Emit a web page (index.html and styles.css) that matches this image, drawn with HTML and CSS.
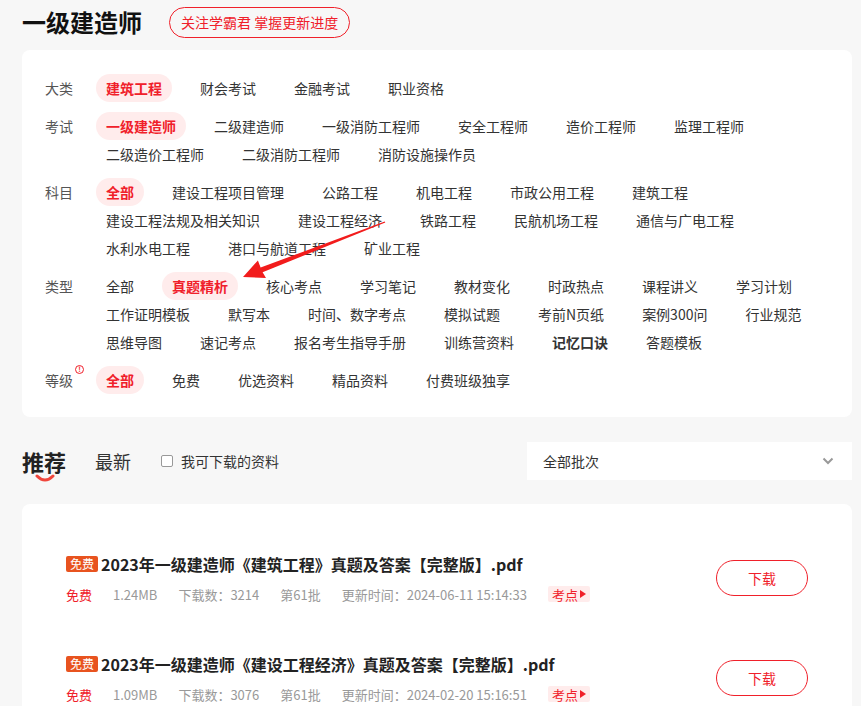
FILE: index.html
```html
<!DOCTYPE html>
<html lang="zh-CN">
<head>
<meta charset="utf-8">
<title>一级建造师</title>
<link rel="stylesheet" href="styles.css">
</head>
<body>
<div class="page">
  <header class="header">
    <h1 class="title">一级建造师</h1>
    <a class="follow">关注学霸君 掌握更新进度</a>
  </header>

  <section class="filter">
    <div class="row">
      <div class="label">大类</div>
      <div class="items">
        <span class="item active">建筑工程</span>
        <span class="item">财会考试</span>
        <span class="item">金融考试</span>
        <span class="item">职业资格</span>
      </div>
    </div>
    <div class="row">
      <div class="label">考试</div>
      <div class="items">
        <span class="item active">一级建造师</span>
        <span class="item">二级建造师</span>
        <span class="item">一级消防工程师</span>
        <span class="item">安全工程师</span>
        <span class="item">造价工程师</span>
        <span class="item">监理工程师</span>
        <span class="item">二级造价工程师</span>
        <span class="item">二级消防工程师</span>
        <span class="item">消防设施操作员</span>
      </div>
    </div>
    <div class="row">
      <div class="label">科目</div>
      <div class="items">
        <span class="item active">全部</span>
        <span class="item">建设工程项目管理</span>
        <span class="item">公路工程</span>
        <span class="item">机电工程</span>
        <span class="item">市政公用工程</span>
        <span class="item">建筑工程</span>
        <span class="item">建设工程法规及相关知识</span>
        <span class="item">建设工程经济</span>
        <span class="item">铁路工程</span>
        <span class="item">民航机场工程</span>
        <span class="item">通信与广电工程</span>
        <span class="item">水利水电工程</span>
        <span class="item">港口与航道工程</span>
        <span class="item">矿业工程</span>
      </div>
    </div>
    <div class="row">
      <div class="label">类型</div>
      <div class="items">
        <span class="item">全部</span>
        <span class="item active">真题精析</span>
        <span class="item">核心考点</span>
        <span class="item">学习笔记</span>
        <span class="item">教材变化</span>
        <span class="item">时政热点</span>
        <span class="item">课程讲义</span>
        <span class="item">学习计划</span>
        <span class="item">工作证明模板</span>
        <span class="item">默写本</span>
        <span class="item">时间、数字考点</span>
        <span class="item">模拟试题</span>
        <span class="item">考前N页纸</span>
        <span class="item">案例300问</span>
        <span class="item">行业规范</span>
        <span class="item">思维导图</span>
        <span class="item">速记考点</span>
        <span class="item">报名考生指导手册</span>
        <span class="item">训练营资料</span>
        <span class="item strong">记忆口诀</span>
        <span class="item">答题模板</span>
      </div>
    </div>
    <div class="row">
      <div class="label"><span class="label-text">等级<span class="info">!</span></span></div>
      <div class="items">
        <span class="item active">全部</span>
        <span class="item">免费</span>
        <span class="item">优选资料</span>
        <span class="item">精品资料</span>
        <span class="item">付费班级独享</span>
      </div>
    </div>
  </section>

  <svg class="arrow" width="150" height="66" viewBox="0 0 150 66" aria-hidden="true">
    <polygon points="3,60 26,61 22.6,55.2 145.3,5.6 144.7,4.4 20.6,50.6 17.9,43.5" fill="#f21c1c"/>
  </svg>

  <div class="tabs">
    <div class="tab tab-active">推荐
      <svg class="smile" width="20" height="9" viewBox="0 0 20 9"><path d="M2 2 Q10 10 18 2" fill="none" stroke="#f0463c" stroke-width="3" stroke-linecap="round"/></svg>
    </div>
    <div class="tab">最新</div>
    <label class="check"><span class="box"></span>我可下载的资料</label>
    <div class="select">
      <span>全部批次</span>
      <svg width="12" height="8" viewBox="0 0 12 8"><path d="M1.5 1.5 L6 6 L10.5 1.5" fill="none" stroke="#999" stroke-width="2"/></svg>
    </div>
  </div>

  <section class="list">
    <div class="doc">
      <div class="doc-main">
        <div class="doc-title"><span class="free-tag">免费</span>2023年一级建造师《建筑工程》真题及答案【完整版】.pdf</div>
        <div class="meta">
          <span class="price">免费</span>
          <span>1.24MB</span>
          <span>下载数：3214</span>
          <span>第61批</span>
          <span>更新时间：2024-06-11 15:14:33</span>
          <span class="point">考点<i class="tri"></i></span>
        </div>
      </div>
      <a class="download">下载</a>
    </div>
    <div class="doc">
      <div class="doc-main">
        <div class="doc-title"><span class="free-tag">免费</span>2023年一级建造师《建设工程经济》真题及答案【完整版】.pdf</div>
        <div class="meta">
          <span class="price">免费</span>
          <span>1.09MB</span>
          <span>下载数：3076</span>
          <span>第61批</span>
          <span>更新时间：2024-02-20 15:16:51</span>
          <span class="point">考点<i class="tri"></i></span>
        </div>
      </div>
      <a class="download">下载</a>
    </div>
  </section>
</div>
</body>
</html>
```

FILE: styles.css
```css
html, body {
  margin: 0;
  padding: 0;
  overflow: hidden;
  background: #f7f7f7;
}

body {
  font-family: "Noto Sans CJK SC", "Noto Sans", sans-serif;
  color: #333;
}

.page {
  position: relative;
  width: 830px;
  margin-left: 22px;
}

.header {
  display: flex;
  align-items: center;
  height: 44px;
  margin-bottom: 6px;
}

.title {
  margin: 0;
  font-size: 24px;
  font-weight: 700;
  line-height: 44px;
  color: #111;
}

.follow {
  margin-left: 27px;
  height: 29px;
  line-height: 29px;
  padding: 0 11px;
  border: 1px solid #f0202a;
  border-radius: 16px;
  font-size: 14px;
  color: #f0202a;
}

.filter {
  background: #fff;
  border-radius: 8px;
  padding: 24px 23px 23px 23px;
}

.row {
  display: flex;
  margin-bottom: 10px;
}

.row:last-child {
  margin-bottom: 0;
}

.label {
  width: 51px;
  flex-shrink: 0;
  font-size: 14px;
  line-height: 28px;
  color: #555;
}

.label-text {
  position: relative;
}

.info {
  position: absolute;
  right: -11px;
  top: -5px;
  width: 7px;
  height: 7px;
  border: 1px solid #f0202a;
  border-radius: 50%;
  font-size: 7px;
  line-height: 7px;
  text-align: center;
  color: #f0202a;
  font-weight: 700;
}

.items {
  flex: 1;
  display: flex;
  flex-wrap: wrap;
  column-gap: 18px;
}

.item {
  padding: 0 10px;
  height: 28px;
  line-height: 28px;
  font-size: 14px;
  color: #333;
  border-radius: 14px;
  white-space: nowrap;
}

.item.active {
  background: #ffecec;
  color: #f0202a;
  font-weight: 700;
}

.item.strong {
  font-weight: 700;
}

.arrow {
  position: absolute;
  left: 218px;
  top: 217px;
}

.tabs {
  display: flex;
  align-items: center;
  height: 38px;
  margin-top: 25px;
}

.tab {
  position: relative;
  font-size: 18px;
  color: #333;
  line-height: 38px;
  margin-right: 30px;
}

.tab-active {
  font-size: 22px;
  font-weight: 700;
  color: #222;
  margin-right: 29px;
}

.smile {
  position: absolute;
  left: 13px;
  top: 32px;
}

.check {
  display: flex;
  align-items: center;
  font-size: 14px;
  color: #333;
}

.box {
  width: 10px;
  height: 10px;
  border: 1px solid #999;
  border-radius: 2px;
  background: #fff;
  margin-right: 8px;
}

.select {
  margin-left: auto;
  width: 325px;
  height: 38px;
  box-sizing: border-box;
  padding: 0 18px 0 16px;
  background: #fff;
  display: flex;
  align-items: center;
  justify-content: space-between;
  font-size: 14px;
  color: #333;
}

.list {
  margin-top: 24px;
  background: #fff;
  border-radius: 8px;
  padding: 0 44px 40px 44px;
}

.doc {
  display: flex;
  align-items: center;
  padding-top: 48px;
}

.doc-main {
  flex: 1;
}

.doc-title {
  display: flex;
  align-items: center;
  height: 24px;
  font-size: 16px;
  font-weight: 700;
  color: #222;
  white-space: nowrap;
}

.free-tag {
  height: 16px;
  line-height: 16px;
  padding: 0 4px;
  margin-right: 3px;
  background: #e8531f;
  color: #fff;
  font-size: 12px;
  font-weight: 400;
  border-radius: 2px;
}

.meta {
  display: flex;
  align-items: center;
  height: 20px;
  margin-top: 8px;
  font-size: 13px;
  color: #999;
  column-gap: 21px;
}

.price {
  color: #f0202a;
}

.point {
  display: flex;
  align-items: center;
  height: 16px;
  padding: 0 4px;
  background: #ffecec;
  color: #f0202a;
  border-radius: 2px;
}

.tri {
  width: 0;
  height: 0;
  margin-left: 2px;
  border-left: 6px solid #f0202a;
  border-top: 4px solid transparent;
  border-bottom: 4px solid transparent;
}

.download {
  width: 92px;
  height: 36px;
  box-sizing: border-box;
  border: 1px solid #f0202a;
  border-radius: 18px;
  text-align: center;
  line-height: 34px;
  font-size: 14px;
  color: #f0202a;
}
```
